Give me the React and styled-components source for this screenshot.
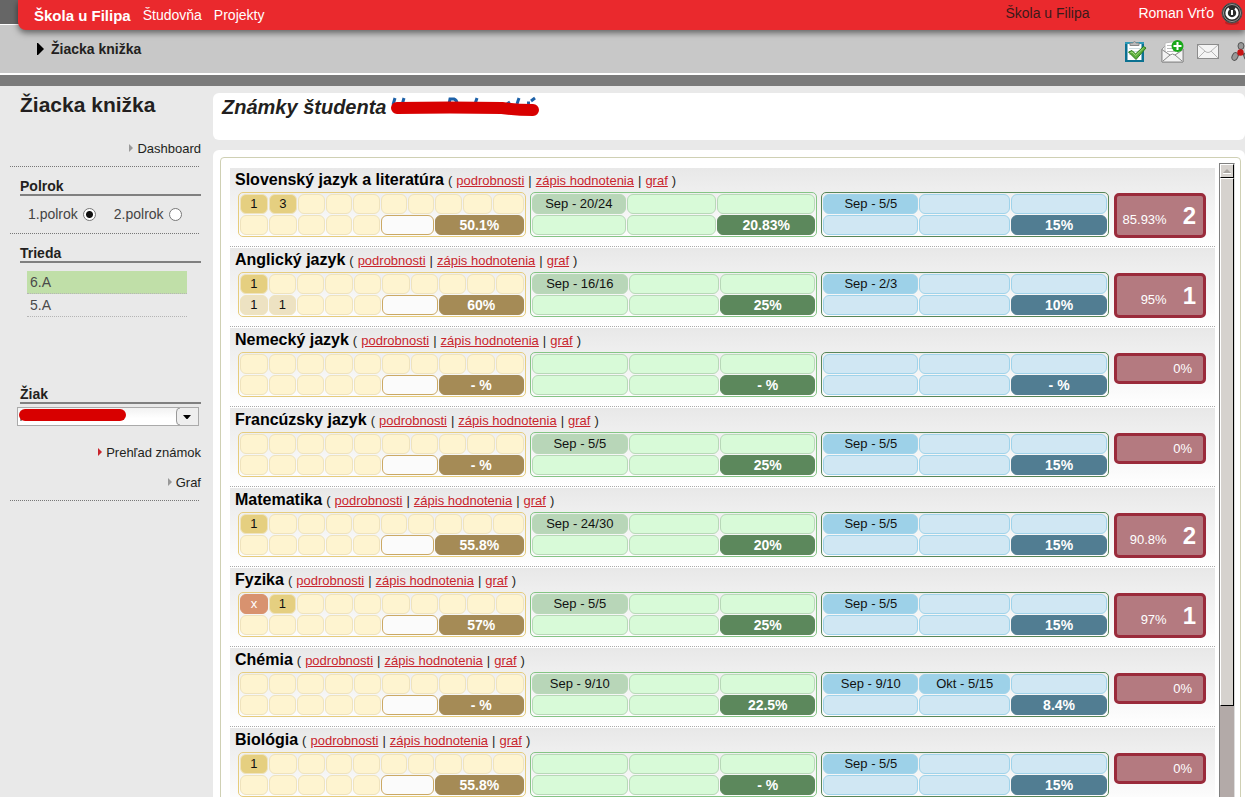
import styled, { createGlobalStyle, css } from "styled-components";

const GlobalStyle = createGlobalStyle`
  * {
    box-sizing: border-box;
  }

  body {
    margin: 0;
    overflow: hidden;
    background: #e9e9e9;
    color: #231f20;
    font-family: "Liberation Sans", Arial, sans-serif;
    font-size: 13px;
  }
`;

/* ---------- header ---------- */

const Header = styled.header`
  background: linear-gradient(#666 0 24px, #fff 24px 25px, #c8c8c8 25px);
  border-bottom: 11px solid #7b7b7b;
`;

const TopBar = styled.div`
  display: flex;
  align-items: center;
  height: 30px;
  margin-left: 18px;
  padding: 0 2px 0 16px;
  background: #ea292d;
  border-bottom-left-radius: 8px;
  box-shadow: 0 3px 6px rgba(0, 0, 0, 0.5);
  color: #fff;
  font-size: 14px;
`;

const TopNav = styled.nav`
  display: flex;
  align-items: center;
  gap: 12px;
  flex: 1;
`;

const TopLink = styled.a`
  color: #fff;
  text-decoration: none;
  font-size: ${(props) => (props.$active ? "15px" : "14px")};
  font-weight: ${(props) => (props.$active ? "bold" : "normal")};
`;

const SchoolName = styled.span`
  margin-right: 49px;
  padding-bottom: 4px;
  color: #3a1a1a;
`;

const UserName = styled.span`
  margin-right: 7px;
  padding-bottom: 4px;
`;

const IconButton = styled.button`
  display: flex;
  padding: 0;
  border: 0;
  background: none;
  cursor: pointer;
`;

const PowerButton = styled(IconButton)`
  margin-bottom: 4px;
`;

const SubBar = styled.div`
  display: flex;
  align-items: center;
  justify-content: space-between;
  height: 45px;
  padding-left: 37px;
  border-bottom: 2px solid #fff;
`;

const Breadcrumb = styled.a`
  display: flex;
  align-items: center;
  gap: 7px;
  padding-bottom: 6px;
  color: #231f20;
  font-size: 14px;
  font-weight: bold;
  text-decoration: none;
`;

const Tools = styled.div`
  display: flex;
  align-items: center;
  gap: 12px;
  margin-right: -8px;
`;

/* ---------- page ---------- */

const Page = styled.div`
  display: flex;
  align-items: flex-start;
`;

const Sidebar = styled.aside`
  flex: 0 0 213px;
  padding: 7px 12px 0 10px;
`;

const SideTitle = styled.h1`
  margin: 0 0 16px 10px;
  font-size: 21px;
  line-height: 24px;
`;

const SideLink = styled.a`
  display: flex;
  align-items: center;
  justify-content: flex-end;
  gap: 4px;
  height: 30px;
  color: #231f20;
  text-decoration: none;
`;

const Divider = styled.hr`
  margin: 3px 2px 0 0;
  border: 0;
  border-top: 1px dotted #777;
`;

const SideHeading = styled.h2`
  margin: 11px 0 0 10px;
  border-bottom: 2px solid #808080;
  font-size: 14px;
  line-height: 16px;
`;

const RadioRow = styled.div`
  display: flex;
  gap: 18px;
  height: 34px;
  padding: 2px 0 0 18px;
`;

const RadioLabel = styled.label`
  display: flex;
  align-items: center;
  gap: 5px;
  color: #444;
  font-size: 14px;
`;

const Radio = styled.input`
  appearance: none;
  width: 13px;
  height: 13px;
  margin: 0;
  border: 1px solid #777;
  border-radius: 50%;
  background: #fff;

  &:checked {
    background: radial-gradient(#111 0 3px, #fff 4px);
  }
`;

const ClassList = styled.ul`
  margin: 8px 14px 69px 17px;
  padding: 0;
  list-style: none;
`;

const ClassItem = styled.li`
  height: 23px;
  padding-left: 3px;
  border-bottom: 1px dotted #b5b5b5;
  background: ${(props) => (props.$active ? "#c0dfa8" : "transparent")};
`;

const ClassLink = styled.a`
  color: #4a4a4a;
  font-size: 14px;
  line-height: 22px;
  text-decoration: none;
`;

const SelectBox = styled.div`
  position: relative;
  height: 19px;
  margin: 3px 2px 11px 7px;
`;

const Select = styled.select`
  display: block;
  appearance: none;
  width: 100%;
  height: 19px;
  border: 1px solid #aaa;
  border-radius: 0;
  background: linear-gradient(#f2f2f2, #fff 60%);
`;

const SelectArrow = styled.svg`
  position: absolute;
  top: 1px;
  right: 1px;
  pointer-events: none;
`;

const SelectMark = styled.svg`
  position: absolute;
  top: 1px;
  left: 1px;
  pointer-events: none;
`;

/* ---------- content ---------- */

const Main = styled.main`
  flex: 1;
  min-width: 0;
  padding-top: 7px;
`;

const TitlePanel = styled.div`
  display: flex;
  align-items: flex-start;
  gap: 4px;
  height: 47px;
  margin-bottom: 10px;
  padding: 2px 9px;
  border-radius: 6px;
  background: #fff;
`;

const Title = styled.h2`
  margin: 0;
  font-size: 20px;
  font-style: italic;
  line-height: 24px;
`;

const GradesPanel = styled.div`
  padding: 7px 4px 7px 7px;
  border-radius: 6px;
  background: #fff;
`;

const ScrollFrame = styled.div`
  display: flex;
  gap: 4px;
  padding: 5px 5px 5px 9px;
  border: 1px solid #cfd0b4;
  border-radius: 4px;
`;

const Subjects = styled.div`
  flex: 1;
  min-width: 0;
  padding-top: 5px;
`;

const SubjectRow = styled.section`
  height: 80px;
  border-bottom: 1px solid #fff;
  background: linear-gradient(#e8e8e8, #fff);
`;

const SubjectInner = styled.div`
  height: 79px;
  padding: 0 9px 0 8px;
  border-bottom: 1px dotted #aaa;
`;

const SubjectHead = styled.div`
  display: flex;
  align-items: baseline;
  gap: 4px;
  height: 24px;
  margin-left: -3px;
  line-height: 24px;
`;

const SubjectName = styled.h3`
  margin: 0;
  color: #000;
  font-size: 16px;
`;

const SubjectLink = styled.a`
  color: #c9252d;
`;

const Grids = styled.div`
  display: flex;
  align-items: flex-start;
  gap: 4px;
`;

const themes = {
  yellow: {
    frame: "#e6cc7c",
    cell: "#fef4d0",
    line: "#efe3bd",
    mark: "#e5cf80",
    total: "#a58b56",
  },
  green: {
    frame: "#84c584",
    cell: "#d8fad8",
    line: "#b8d8b8",
    mark: "#b8d6b8",
    total: "#5c885c",
  },
  blue: {
    frame: "#588658",
    cell: "#d0e7f3",
    line: "#9fd3ea",
    mark: "#9dd1e8",
    total: "#517d92",
  },
};

const MarksTable = styled.table`
  flex: 1 1 0;
  width: 0;
  height: 45px;
  table-layout: fixed;
  border: 1px solid ${(props) => props.$theme.frame};
  border-radius: 5px;
  border-collapse: separate;
  border-spacing: 1px;
`;

const Cell = styled.td`
  height: 20px;
  padding: 0;
  border: 1px solid ${(props) => props.$theme.line};
  border-radius: 6px;
  background: ${(props) => props.$theme.cell};
  color: #111;
  line-height: 18px;
  text-align: center;
  white-space: nowrap;

  ${(props) =>
    props.$kind === "mark" &&
    css`
      background: ${props.$theme.mark};
    `}

  ${(props) =>
    props.$kind === "light" &&
    css`
      background: #ede2c2;
    `}

  ${(props) =>
    props.$kind === "absent" &&
    css`
      border-color: #d8926f;
      background: #d8926f;
      color: #fff;
    `}

  ${(props) =>
    props.$kind === "blank" &&
    css`
      border-color: #cba964;
      background: #fbfbfb;
    `}

  ${(props) =>
    props.$kind === "total" &&
    css`
      border-color: ${props.$theme.total};
      background: ${props.$theme.total};
      color: #fff;
      font-size: 14px;
      font-weight: bold;
    `}
`;

const FinalMark = styled.div`
  display: flex;
  align-items: center;
  justify-content: flex-end;
  flex: 0 0 92px;
  height: ${(props) => (props.$graded ? "45px" : "31px")};
  margin: 1px 0 0 1px;
  padding-right: ${(props) => (props.$graded ? "7px" : "11px")};
  border: 3px solid #9a2b3b;
  border-radius: 5px;
  background: #b47a80;
  color: #fff;
`;

const FinalPercent = styled.span`
  padding-top: ${(props) => (props.$graded ? "7px" : "0")};
`;

const FinalGrade = styled.strong`
  margin-left: 16px;
  font-size: 24px;
`;

const ScrollBar = styled.div`
  width: 16px;
  border: 1px solid #808080;
  border-right-color: #ddd;
  background: #b3aaa8;
`;

const ScrollPart = styled.div`
  display: flex;
  align-items: center;
  justify-content: center;
  height: ${(props) => props.$size}px;
  border: 1px solid #fff;
  border-right-color: #000;
  border-bottom-color: #000;
  background: #d6d2ce;
`;

/* ---------- icons ---------- */

const Arrow = ({ color }) => (
  <svg width="4" height="8" viewBox="0 0 4 8" aria-hidden="true">
    <path d="M0 0L4 4L0 8Z" fill={color} />
  </svg>
);

const PowerIcon = () => (
  <svg width="22" height="24" viewBox="0 0 22 24">
    <ellipse cx="11" cy="21.5" rx="7" ry="2.5" fill="#8d1719" opacity="0.5" />
    <circle cx="11" cy="12" r="10" fill="#2b2b2b" stroke="#555" />
    <circle cx="11" cy="12" r="8.5" fill="none" stroke="#999" />
    <path d="M8 7.5A5.4 5.4 0 1 0 14 7.5" fill="none" stroke="#fff" strokeWidth="2.4" />
    <path d="M11 9V14" stroke="#fff" strokeWidth="2" />
  </svg>
);

const ClipboardIcon = () => (
  <svg width="24" height="24" viewBox="0 0 24 24">
    <path d="M0 2H19V22H0Z" fill="#0b7191" />
    <path d="M0 2H19V4H0Z" fill="#2b9ab8" />
    <path d="M2.5 4H16.5V20H2.5Z" fill="#fff" />
    <path d="M4 8.5H15M4 11.5H15M4 14.5H9" stroke="#cfdde2" />
    <path d="M5 5.5V3H7.5Q9.500 0 11.500 3H14V5.5Z" fill="#bbb" stroke="#888" />
    <path d="M3.5 12L7 10.5L10.5 14L18.5 6.5L21 8L11 19.5Z" fill="#5dad3c" stroke="#2f7d1c" />
    <path d="M5.5 12.5L7 12L10.700 15.5L18.500 8" fill="none" stroke="#a4dc7c" />
  </svg>
);

const NewMailIcon = () => (
  <svg width="24" height="24" viewBox="0 0 24 24">
    <path d="M1 9L5 5H18L22 9V22H1Z" fill="#eee" stroke="#999" />
    <path d="M4 3L17 1V13L11 17L4 12Z" fill="#fff" stroke="#bbb" />
    <path d="M6 5.5H12M6 8.5H14M6 11.5H15" stroke="#bbb" />
    <path d="M1 10L11 16L22 10V22H1Z" fill="#f3f3f3" />
    <path d="M1.5 10L9 15M21.5 10L14 15M2 21L9 15Q11.5 13 14 15L21 21" fill="none" stroke="#888" />
    <path d="M1 9V22H22V9" fill="none" stroke="#888" />
    <circle cx="16.5" cy="6" r="6" fill="#18a818" />
    <path d="M16.5 2V10M12.5 6H20.5" stroke="#fff" strokeWidth="2" />
  </svg>
);

const MailIcon = () => (
  <svg width="22" height="15" viewBox="0 0 22 15">
    <rect x="0.5" y="0.5" width="21" height="14" fill="#f4f4f4" stroke="#8c8c8c" />
    <path d="M1 1L9 8Q11 9 13 8L21 1M1 14L8 7M21 14L14 7" fill="none" stroke="#b5b5b5" />
  </svg>
);

const NetworkIcon = () => (
  <svg width="22" height="20" viewBox="0 0 22 20">
    <path d="M10 5V11L4 15M10 11L17 15" fill="none" stroke="#444" strokeWidth="2" />
    <ellipse cx="10" cy="4" rx="3" ry="3.5" fill="#999" stroke="#555" />
    <ellipse cx="4" cy="14.5" rx="2.8" ry="4" fill="#999" stroke="#555" transform="rotate(25 4 14.5)" />
    <ellipse cx="16" cy="14.5" rx="2.8" ry="4" fill="#999" stroke="#555" transform="rotate(-25 16 14.5)" />
    <circle cx="9.5" cy="10.5" r="3.2" fill="#c91414" />
  </svg>
);

const NameMark = () => (
  <svg width="150" height="22" viewBox="0 0 150 22" role="img" aria-label="Skryté meno">
    <path
      d="M3 10L5 3M12 10L14 3M59 9L60 4H64Q67 5 67 9M85 9L87 3M117 9L120 7M127 9L129 3M137 8H140M141 6L145 3"
      fill="none"
      stroke="#1d61a8"
      strokeWidth="3"
    />
    <path d="M7 13Q60 12 112 13Q126 15 143 15" fill="none" stroke="#d80000" strokeWidth="12" strokeLinecap="round" />
  </svg>
);

/* ---------- data ---------- */

const even10 = [29, 28, 28, 29, 28, 29, 28, 28, 29, 29];
const wide10 = [29, 29, 28, 27, 28, 27, 27, 28, 30, 32];
const even3 = [97, 91, 96];
const wide3 = [95, 90, 99];
const blue3 = [96, 92, 97];

const subjects = [
  {
    name: "Slovenský jazyk a literatúra",
    marks: ["1", "3"],
    total: "50.1%",
    green: ["Sep - 20/24"],
    greenTotal: "20.83%",
    blue: ["Sep - 5/5"],
    blueTotal: "15%",
    percent: "85.93%",
    grade: "2",
  },
  {
    name: "Anglický jazyk",
    marks: ["1"],
    extra: ["1", "1"],
    total: "60%",
    green: ["Sep - 16/16"],
    greenTotal: "25%",
    blue: ["Sep - 2/3"],
    blueTotal: "10%",
    percent: "95%",
    grade: "1",
  },
  {
    name: "Nemecký jazyk",
    marks: [],
    total: "- %",
    green: [],
    greenTotal: "- %",
    blue: [],
    blueTotal: "- %",
    percent: "0%",
  },
  {
    name: "Francúzsky jazyk",
    marks: [],
    total: "- %",
    green: ["Sep - 5/5"],
    greenTotal: "25%",
    blue: ["Sep - 5/5"],
    blueTotal: "15%",
    percent: "0%",
  },
  {
    name: "Matematika",
    marks: ["1"],
    total: "55.8%",
    green: ["Sep - 24/30"],
    greenTotal: "20%",
    blue: ["Sep - 5/5"],
    blueTotal: "15%",
    percent: "90.8%",
    grade: "2",
  },
  {
    name: "Fyzika",
    marks: ["x", "1"],
    total: "57%",
    green: ["Sep - 5/5"],
    greenTotal: "25%",
    blue: ["Sep - 5/5"],
    blueTotal: "15%",
    percent: "97%",
    grade: "1",
  },
  {
    name: "Chémia",
    marks: [],
    total: "- %",
    green: ["Sep - 9/10"],
    greenTotal: "22.5%",
    blue: ["Sep - 9/10", "Okt - 5/15"],
    blueTotal: "8.4%",
    percent: "0%",
  },
  {
    name: "Biológia",
    marks: ["1"],
    total: "55.8%",
    green: [],
    greenTotal: "- %",
    blue: ["Sep - 5/5"],
    blueTotal: "15%",
    percent: "0%",
  },
];

const markKind = (mark) => {
  if (!mark) return "empty";
  return mark === "x" ? "absent" : "mark";
};

/* ---------- components ---------- */

function Columns({ widths }) {
  const sum = widths.reduce((a, b) => a + b, 0);
  return (
    <colgroup>
      {widths.map((width, i) => (
        <col key={i} style={{ width: `${(width / sum) * 100}%` }} />
      ))}
    </colgroup>
  );
}

function WrittenMarks({ marks, extra = [], total }) {
  const theme = themes.yellow;
  return (
    <MarksTable $theme={theme}>
      <Columns widths={total.includes(".") ? wide10 : even10} />
      <tbody>
        <tr>
          {even10.map((_, i) => (
            <Cell key={i} $theme={theme} $kind={markKind(marks[i])}>
              {marks[i]}
            </Cell>
          ))}
        </tr>
        <tr>
          {even10.slice(0, 5).map((_, i) => (
            <Cell key={i} $theme={theme} $kind={extra[i] ? "light" : "empty"}>
              {extra[i]}
            </Cell>
          ))}
          <Cell colSpan={2} $theme={theme} $kind="blank" />
          <Cell colSpan={3} $theme={theme} $kind="total">
            {total}
          </Cell>
        </tr>
      </tbody>
    </MarksTable>
  );
}

function MonthMarks({ color, widths, marks, total }) {
  const theme = themes[color];
  return (
    <MarksTable $theme={theme}>
      <Columns widths={widths} />
      <tbody>
        <tr>
          {widths.map((_, i) => (
            <Cell key={i} $theme={theme} $kind={markKind(marks[i])}>
              {marks[i]}
            </Cell>
          ))}
        </tr>
        <tr>
          <Cell $theme={theme} />
          <Cell $theme={theme} />
          <Cell $theme={theme} $kind="total">
            {total}
          </Cell>
        </tr>
      </tbody>
    </MarksTable>
  );
}

function Subject({ subject }) {
  const graded = Boolean(subject.grade);
  return (
    <SubjectRow>
      <SubjectInner>
        <SubjectHead>
          <SubjectName>{subject.name}</SubjectName>
          <span>(</span>
          <SubjectLink href="#podrobnosti">podrobnosti</SubjectLink>
          <span>|</span>
          <SubjectLink href="#zapis">zápis hodnotenia</SubjectLink>
          <span>|</span>
          <SubjectLink href="#graf">graf</SubjectLink>
          <span>)</span>
        </SubjectHead>
        <Grids>
          <WrittenMarks
            marks={subject.marks}
            extra={subject.extra}
            total={subject.total}
          />
          <MonthMarks
            color="green"
            widths={subject.greenTotal === "20.83%" ? wide3 : even3}
            marks={subject.green}
            total={subject.greenTotal}
          />
          <MonthMarks
            color="blue"
            widths={blue3}
            marks={subject.blue}
            total={subject.blueTotal}
          />
          <FinalMark $graded={graded}>
            <FinalPercent $graded={graded}>{subject.percent}</FinalPercent>
            {graded && <FinalGrade>{subject.grade}</FinalGrade>}
          </FinalMark>
        </Grids>
      </SubjectInner>
    </SubjectRow>
  );
}

export default function App() {
  return (
    <>
      <GlobalStyle />
      <Header>
        <TopBar>
          <TopNav>
            <TopLink href="#skola" $active>
              Škola u Filipa
            </TopLink>
            <TopLink href="#studovna">Študovňa</TopLink>
            <TopLink href="#projekty">Projekty</TopLink>
          </TopNav>
          <SchoolName>Škola u Filipa</SchoolName>
          <UserName>Roman Vrťo</UserName>
          <PowerButton aria-label="Odhlásiť">
            <PowerIcon />
          </PowerButton>
        </TopBar>
        <SubBar>
          <Breadcrumb href="#knizka">
            <svg width="7" height="12" viewBox="0 0 7 12" aria-hidden="true">
              <path d="M0 0H1L7 6L1 12H0Z" fill="#000" />
            </svg>
            Žiacka knižka
          </Breadcrumb>
          <Tools>
            <IconButton aria-label="Úlohy">
              <ClipboardIcon />
            </IconButton>
            <IconButton aria-label="Nová správa">
              <NewMailIcon />
            </IconButton>
            <IconButton aria-label="Správy">
              <MailIcon />
            </IconButton>
            <IconButton aria-label="Kontakty">
              <NetworkIcon />
            </IconButton>
          </Tools>
        </SubBar>
      </Header>

      <Page>
        <Sidebar>
          <SideTitle>Žiacka knižka</SideTitle>
          <SideLink href="#dashboard">
            <Arrow color="#999" />
            Dashboard
          </SideLink>
          <Divider />
          <SideHeading>Polrok</SideHeading>
          <RadioRow>
            <RadioLabel>
              1.polrok
              <Radio type="radio" name="polrok" defaultChecked />
            </RadioLabel>
            <RadioLabel>
              2.polrok
              <Radio type="radio" name="polrok" />
            </RadioLabel>
          </RadioRow>
          <Divider />
          <SideHeading>Trieda</SideHeading>
          <ClassList>
            <ClassItem $active>
              <ClassLink href="#6a">6.A</ClassLink>
            </ClassItem>
            <ClassItem>
              <ClassLink href="#5a">5.A</ClassLink>
            </ClassItem>
          </ClassList>
          <SideHeading>
            <label htmlFor="ziak">Žiak</label>
          </SideHeading>
          <SelectBox>
            <Select id="ziak">
              <option></option>
            </Select>
            <SelectMark width="110" height="15" viewBox="0 0 110 15" aria-hidden="true">
              <path d="M3 9V13M12 12.5H85" stroke="#222" strokeDasharray="5 4" />
              <path d="M7 7H102" stroke="#d80000" strokeWidth="12" strokeLinecap="round" />
            </SelectMark>
            <SelectArrow width="22" height="17" viewBox="0 0 22 17" aria-hidden="true">
              <path d="M22 0H4Q0 0 0 4V13Q0 17 4 17H22Z" fill="#eee" />
              <path d="M4 0Q0.5 0 0.5 4V13Q0.5 17 4 17" fill="none" stroke="#999" />
              <path d="M7 7H15L11.5 11H10.5Z" fill="#000" />
            </SelectArrow>
          </SelectBox>
          <SideLink href="#prehlad">
            <Arrow color="#c9252d" />
            Prehľad známok
          </SideLink>
          <SideLink href="#graf">
            <Arrow color="#999" />
            Graf
          </SideLink>
          <Divider />
        </Sidebar>

        <Main>
          <TitlePanel>
            <Title>Známky študenta</Title>
            <NameMark />
          </TitlePanel>
          <GradesPanel>
            <ScrollFrame>
              <Subjects>
                {subjects.map((subject) => (
                  <Subject key={subject.name} subject={subject} />
                ))}
              </Subjects>
              <ScrollBar aria-hidden="true">
                <ScrollPart $size={14}>
                  <svg width="8" height="5" viewBox="0 0 8 5">
                    <path d="M0 4L4 0L8 4Z" fill="#aaa6a2" />
                    <path d="M0 4.5H8" stroke="#fff" />
                  </svg>
                </ScrollPart>
                <ScrollPart $size={528} />
              </ScrollBar>
            </ScrollFrame>
          </GradesPanel>
        </Main>
      </Page>
    </>
  );
}
